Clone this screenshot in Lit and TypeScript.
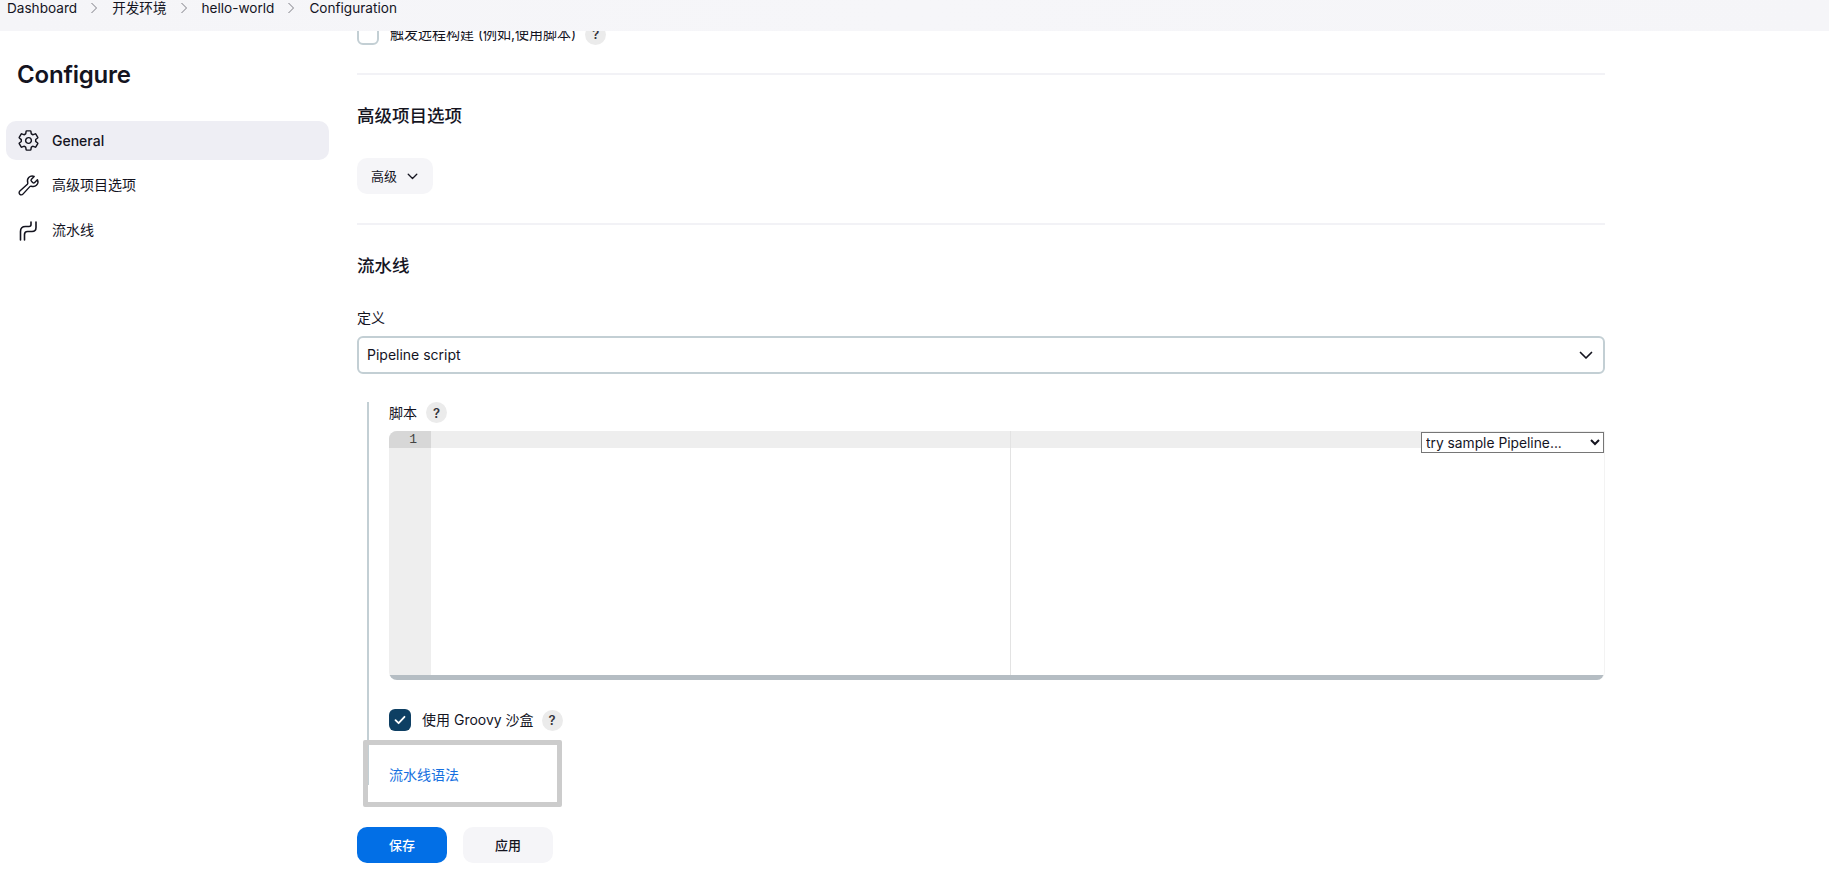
import { LitElement, html, css, svg } from "lit";
import { customElement } from "lit/decorators.js";

const gear = svg`<path d="M262.29 192.31a64 64 0 1057.4 57.4 64.13 64.13 0 00-57.4-57.4zM416.39 256a154.34 154.34 0 01-1.53 20.79l45.21 35.46a10.81 10.81 0 012.45 13.75l-42.77 74a10.81 10.81 0 01-13.14 4.59l-44.9-18.08a16.11 16.11 0 00-15.17 1.75A164.48 164.48 0 01325 400.8a15.94 15.94 0 00-8.82 12.14l-6.73 47.89a11.08 11.08 0 01-10.68 9.17h-85.54a11.11 11.11 0 01-10.69-8.87l-6.72-47.82a16.07 16.07 0 00-9-12.22 155.3 155.3 0 01-21.46-12.57 16 16 0 00-15.11-1.71l-44.89 18.07a10.81 10.81 0 01-13.14-4.58l-42.77-74a10.8 10.8 0 012.45-13.75l38.21-30a16.05 16.05 0 006-14.08c-.36-4.17-.58-8.33-.58-12.5s.21-8.27.58-12.35a16 16 0 00-6.07-13.94l-38.19-30A10.81 10.81 0 0149.48 186l42.77-74a10.81 10.81 0 0113.14-4.59l44.9 18.08a16.11 16.11 0 0015.17-1.75A164.48 164.48 0 01187 111.2a15.94 15.94 0 008.82-12.14l6.73-47.89A11.08 11.08 0 01213.23 42h85.54a11.11 11.11 0 0110.69 8.87l6.72 47.82a16.07 16.07 0 009 12.22 155.3 155.3 0 0121.46 12.57 16 16 0 0015.11 1.71l44.89-18.07a10.81 10.81 0 0113.14 4.58l42.77 74a10.8 10.8 0 01-2.45 13.75l-38.21 30a16.05 16.05 0 00-6.05 14.08c.33 4.14.55 8.3.55 12.47z" fill="none" stroke="currentColor" stroke-width="32" stroke-linecap="round" stroke-linejoin="round"/>`;
const wrench = svg`<path d="M393.87 190a32.1 32.1 0 01-45.25 0l-26.57-26.57a32.09 32.09 0 010-45.26L382.19 58a1 1 0 00-.3-1.64c-38.82-16.64-89.15-8.16-121.11 23.57-30.58 30.35-32.32 76-21.12 115.84a31.93 31.93 0 01-9.06 32.08L64 380a48.17 48.17 0 1068 68l153.86-167a31.93 31.93 0 0131.6-9.13c39.54 10.59 84.54 8.6 114.72-21.19 32.49-32 39.5-88.56 23.75-120.93a1 1 0 00-1.6-.26z" fill="none" stroke="currentColor" stroke-width="32" stroke-linecap="round" stroke-miterlimit="10"/>`;

const chev = html`<svg class="crumb-sep" viewBox="0 0 8 12"><path d="M1.5 1l5 5-5 5" fill="none" stroke="currentColor" stroke-width="1"/></svg>`;
const down = () => html`<svg viewBox="0 0 14 9"><path d="M1.5 1.5L7 7l5.5-5.5" fill="none" stroke="currentColor" stroke-width="1.7" stroke-linecap="round" stroke-linejoin="round"/></svg>`;

@customElement("app-root")
export class AppRoot extends LitElement {
  static styles = css`
    :host {
      display: block;
      width: 1829px;
      height: 891px;
      overflow: hidden;
      background: #fff;
      color: #14141f;
      font-family: Inter, "Noto Sans CJK SC", sans-serif;
      font-size: 14px;
      line-height: 20px;
    }
    .crumbs {
      position: relative;
      z-index: 2;
      height: 31px;
      box-sizing: border-box;
      background: linear-gradient(100deg, #f5f5f8 0%, #f6f6f9 50%, #f5f5f8 100%);
      display: flex;
      align-items: flex-start;
      padding-left: 7px;
      line-height: 16px;
      font-size: 13.6px;
    }
    .crumb-sep {
      width: 8px;
      height: 12px;
      color: #7d7d85;
      margin: 2px 14px 0 13px;
    }
    .layout {
      display: flex;
      align-items: flex-start;
      height: 860px;
    }
    .side {
      width: 357px;
      box-sizing: border-box;
      padding: 0 28px 0 6px;
      flex: none;
    }
    .side h1 {
      margin: 28px 0 30px 11px;
      font-size: 24px;
      line-height: 32px;
      font-weight: 600;
      letter-spacing: -0.2px;
    }
    .nav {
      display: flex;
      flex-direction: column;
      gap: 6px;
    }
    .nav-row {
      height: 39px;
      display: flex;
      align-items: center;
      border-radius: 10px;
      padding-left: 11px;
      gap: 12px;
      font-weight: 500;
    }
    .nav-row .cjk {
      font-weight: 400;
      padding-bottom: 2px;
    }
    .nav-row.active {
      background: #eeeef4;
    }
    .nav-icon {
      width: 23px;
      height: 23px;
      flex: none;
    }
    .main {
      width: 1248px;
      flex: none;
      margin-top: -8px;
    }
    .check-row {
      display: flex;
      align-items: center;
      height: 22px;
    }
    .box {
      width: 22px;
      height: 22px;
      box-sizing: border-box;
      border: 2px solid #c3cfd4;
      border-radius: 6px;
      background: #fff;
      flex: none;
      margin-right: 11px;
    }
    .box.on {
      background: #0e3f63;
      border: none;
      display: flex;
      align-items: center;
      justify-content: center;
      color: #fff;
    }
    .box.on svg {
      width: 12px;
      height: 10px;
    }
    .help {
      width: 21px;
      height: 21px;
      border-radius: 50%;
      background: #ebebeb;
      display: flex;
      align-items: center;
      justify-content: center;
      font-size: 13px;
      font-weight: 600;
      color: #33333b;
      margin-left: 9px;
      flex: none;
    }
    .groovy .help {
      margin-left: 8px;
    }
    .sep {
      height: 2px;
      background: #f2f2f6;
    }
    .sep.a { margin-top: 28px; }
    h2 {
      margin: 0;
      font-size: 17.5px;
      line-height: 24px;
      font-weight: 500;
    }
    .h-adv { margin: 29px 0 30px; }
    .adv {
      width: 76px;
      height: 36px;
      border-radius: 10px;
      background: #f5f5f8;
      display: flex;
      align-items: center;
      padding-left: 14px;
      box-sizing: border-box;
      font-size: 13px;
    }
    .adv svg {
      width: 11px;
      height: 7px;
      margin-left: 10px;
    }
    .sep.b { margin-top: 29px; }
    .h-pipe { margin: 29px 0 30px; }
    .field-label {
      line-height: 20px;
      margin-bottom: 8px;
    }
    .select {
      height: 38px;
      box-sizing: border-box;
      border: 2px solid #c3cfd4;
      border-radius: 6px;
      display: flex;
      align-items: center;
      justify-content: space-between;
      padding: 0 10px 0 8px;
    }
    .select svg {
      width: 14px;
      height: 9px;
    }
    .nested {
      margin: 28px 0 0 10px;
      border-left: 2px solid #c3cfd4;
      padding-left: 20px;
      height: 383px;
      box-sizing: border-box;
    }
    .script-label {
      display: flex;
      align-items: center;
      height: 21px;
      margin-bottom: 8px;
    }
    .editor {
      position: relative;
      height: 249px;
      display: flex;
      flex-wrap: wrap;
      align-content: flex-start;
      border-radius: 8px 0 8px 8px;
      overflow: hidden;
      border-right: 1px solid #f3f3f3;
      box-sizing: border-box;
    }
    .gutter {
      width: 42px;
      height: 244px;
      background: #eeeeee;
      flex: none;
    }
    .gutter-line {
      height: 17px;
      background: #d7d7d7;
      font-family: "Liberation Mono", monospace;
      font-size: 13px;
      line-height: 17px;
      color: #444;
      text-align: right;
      padding-right: 14px;
      box-sizing: border-box;
    }
    .code {
      flex: 1;
      height: 244px;
    }
    .active-line {
      height: 17px;
      background: #eeeeee;
    }
    .strip {
      width: 100%;
      height: 5px;
      background: #b5bdc3;
    }
    .margin-line {
      position: absolute;
      left: 621px;
      top: 0;
      bottom: 5px;
      width: 1px;
      background: #e3e3e3;
    }
    .sample {
      position: absolute;
      right: 0;
      top: 1px;
      width: 183px;
      height: 21px;
      font-family: Inter, sans-serif;
      font-size: 13.8px;
      border: 1px solid #767676;
      border-radius: 0;
      background: #fff;
      color: #14141f;
      padding: 0;
      margin: 0;
    }
    .groovy {
      margin-top: 29px;
    }
    .syntax {
      position: relative;
      margin: 9px 0 0 -26px;
      width: 199px;
      height: 67px;
      box-sizing: border-box;
      border: 5px solid #cccccc;
      border-radius: 2px;
      display: flex;
      align-items: center;
      padding-left: 21px;
      padding-top: 3px;
      color: #1670e0;
    }
    .actions {
      margin-top: 42px;
      display: flex;
      gap: 16px;
    }
    .btn {
      width: 90px;
      height: 36px;
      border-radius: 10px;
      display: flex;
      align-items: center;
      justify-content: center;
      font-weight: 500;
      font-size: 13px;
    }
    .btn.primary {
      background: #026fe6;
      color: #fff;
    }
    .btn.second {
      background: #f5f5f8;
    }
  `;

  render() {
    return html`
      <div class="crumbs">
        <span>Dashboard</span>${chev}<span>开发环境</span>${chev}<span>hello-world</span>${chev}<span>Configuration</span>
      </div>
      <div class="layout">
        <aside class="side">
          <h1>Configure</h1>
          <nav class="nav">
            <div class="nav-row active"><svg class="nav-icon" viewBox="0 0 512 512">${gear}</svg><span>General</span></div>
            <div class="nav-row"><svg class="nav-icon" viewBox="0 0 512 512">${wrench}</svg><span class="cjk">高级项目选项</span></div>
            <div class="nav-row">
              <svg class="nav-icon" viewBox="0 0 23 23" fill="none" stroke="currentColor" stroke-width="1.6" stroke-linecap="round">
                <path d="M19 3V8.5Q19 12.5 15 12.5H10.5Q7.5 12.5 7.5 15.5V21" />
                <path d="M14 3V5.5Q14 7.5 12 7.5H8.5Q3.5 7.5 3.5 12.5V21" />
              </svg>
              <span class="cjk">流水线</span>
            </div>
          </nav>
        </aside>
        <main class="main">
          <div class="check-row">
            <div class="box"></div>
            <span>触发远程构建 (例如,使用脚本)</span>
            <span class="help">?</span>
          </div>
          <div class="sep a"></div>
          <h2 class="h-adv">高级项目选项</h2>
          <div class="adv"><span>高级</span>${down()}</div>
          <div class="sep b"></div>
          <h2 class="h-pipe">流水线</h2>
          <div class="field-label">定义</div>
          <div class="select"><span>Pipeline script</span>${down()}</div>
          <div class="nested">
            <div class="script-label"><span>脚本</span><span class="help">?</span></div>
            <div class="editor">
              <div class="gutter"><div class="gutter-line">1</div></div>
              <div class="code"><div class="active-line"></div></div>
              <div class="strip"></div>
              <div class="margin-line"></div>
              <select class="sample"><option>try sample Pipeline...</option></select>
            </div>
            <div class="check-row groovy">
              <div class="box on">
                <svg viewBox="0 0 12 10"><path d="M1.5 5.2L4.6 8.2 10.5 1.8" fill="none" stroke="currentColor" stroke-width="1.8" stroke-linecap="round" stroke-linejoin="round"/></svg>
              </div>
              <span>使用 Groovy 沙盒</span>
              <span class="help">?</span>
            </div>
            <div class="syntax">流水线语法</div>
          </div>
          <div class="actions">
            <div class="btn primary">保存</div>
            <div class="btn second">应用</div>
          </div>
        </main>
      </div>
    `;
  }
}
